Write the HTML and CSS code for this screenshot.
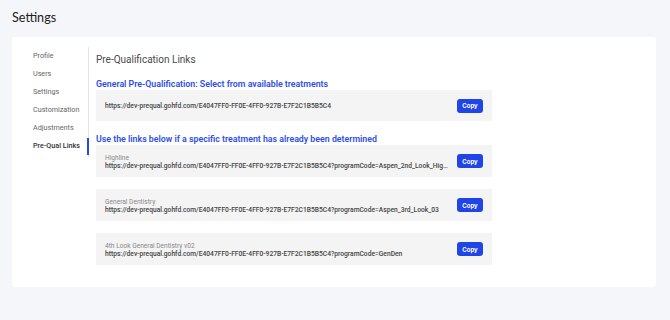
FILE: index.html
```html
<!DOCTYPE html>
<html lang="en">

<head>
  <meta charset="UTF-8">
  <meta name="viewport" content="width=device-width, initial-scale=1.0">
  <title>Settings</title>
  <link rel="stylesheet" href="styles.css">
</head>

<body>

  <h1 class="page-title">Settings</h1>

  <div class="card">
    <ul class="side-nav">
      <li>Profile</li>
      <li>Users</li>
      <li>Settings</li>
      <li>Customization</li>
      <li>Adjustments</li>
      <li class="active">Pre-Qual Links</li>
    </ul>

    <div class="content">
      <h2>Pre-Qualification Links</h2>

      <h3>General Pre-Qualification: Select from available treatments</h3>
      <div class="link-box first">
        <div class="link-text">
          <div class="url">https://dev-prequal.gohfd.com/E4047FF0-FF0E-4FF0-927B-E7F2C1B5B5C4</div>
        </div>
        <button class="copy-btn">Copy</button>
      </div>

      <h3>Use the links below if a specific treatment has already been determined</h3>
      <div class="link-box">
        <div class="link-text">
          <div class="label">Highline</div>
          <div class="url">https://dev-prequal.gohfd.com/E4047FF0-FF0E-4FF0-927B-E7F2C1B5B5C4?programCode=Aspen_2nd_Look_Highline_01</div>
        </div>
        <button class="copy-btn">Copy</button>
      </div>

      <div class="link-box">
        <div class="link-text">
          <div class="label">General Dentistry</div>
          <div class="url">https://dev-prequal.gohfd.com/E4047FF0-FF0E-4FF0-927B-E7F2C1B5B5C4?programCode=Aspen_3rd_Look_03</div>
        </div>
        <button class="copy-btn">Copy</button>
      </div>

      <div class="link-box">
        <div class="link-text">
          <div class="label">4th Look General Dentistry v02</div>
          <div class="url">https://dev-prequal.gohfd.com/E4047FF0-FF0E-4FF0-927B-E7F2C1B5B5C4?programCode=GenDen</div>
        </div>
        <button class="copy-btn">Copy</button>
      </div>
    </div>
  </div>

</body>

</html>
```

FILE: styles.css
```css
body {
  margin: 0;
  padding: 0 14px 0 12px;
  background: #f5f6fa;
  font-family: Roboto, "Liberation Sans", sans-serif;
  color: #444;
}

.page-title {
  margin: 0;
  padding-top: 9px;
  height: 28px;
  font-family: Lato, "Liberation Sans", sans-serif;
  font-size: 12.6px;
  font-weight: 400;
  line-height: 17px;
  color: #222;
}

.card {
  display: flex;
  background: #fff;
  border-radius: 3px;
  height: 250px;
  box-sizing: border-box;
  padding: 10px 0 0 21px;
}

.side-nav {
  list-style: none;
  margin: 0;
  padding: 0;
  width: 55px;
  height: 110px;
  border-right: 1px solid #e4e4e4;
}

.side-nav li {
  font-size: 7.2px;
  line-height: 18.1px;
  color: #666;
  position: relative;
}

.side-nav li.active {
  color: #333;
  font-weight: 500;
}

.side-nav li.active::after {
  content: "";
  position: absolute;
  right: -1px;
  top: 1px;
  height: 17px;
  width: 2px;
  background: #2547e6;
}

.content {
  padding-left: 7px;
  width: 396px;
}

.content h2 {
  margin: 0;
  padding-top: 4px;
  height: 26px;
  font-size: 10px;
  font-weight: 400;
  color: #4a4a4a;
  line-height: 17px;
}

.content h3 {
  margin: 0;
  padding-top: 1px;
  height: 12px;
  font-size: 8.8px;
  font-weight: 600;
  color: #2d4ee8;
  line-height: 12px;
}

.link-box {
  display: flex;
  align-items: center;
  justify-content: space-between;
  background: #f4f4f4;
  height: 32px;
  padding: 0 9px;
  margin-bottom: 12px;
}

.link-box.first {
  height: 31px;
  margin-bottom: 11px;
}

.link-text {
  min-width: 0;
  flex: 1;
  padding-top: 2px;
}

.first .link-text {
  padding-top: 0;
}

.label {
  font-size: 6.6px;
  color: #888;
  line-height: 8px;
}

.url {
  font-size: 6.7px;
  font-weight: 500;
  color: #444;
  line-height: 8px;
  white-space: nowrap;
  overflow: hidden;
  text-overflow: ellipsis;
  padding-right: 8px;
}

.copy-btn {
  width: 26px;
  height: 14px;
  border: none;
  border-radius: 3px;
  background: #1f45e6;
  color: #fff;
  font-family: Inter, "Liberation Sans", sans-serif;
  font-size: 6px;
  font-weight: 700;
  padding: 0;
  flex-shrink: 0;
}
```
